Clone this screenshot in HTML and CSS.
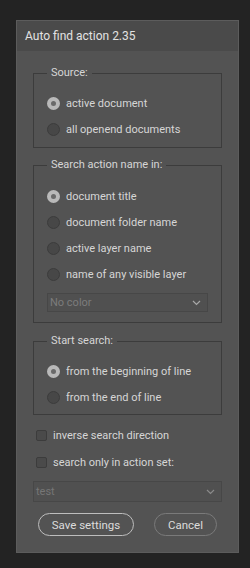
FILE: index.html
```html
<!DOCTYPE html>
<html>
<head>
<meta charset="utf-8">
<link rel="stylesheet" href="styles.css">
</head>
<body>
<div class="dialog">
  <div class="titlebar">Auto find action 2.35</div>
  <div class="content">
    <div class="group g-source">
      <div class="legend">Source:</div>
      <label class="row first"><span class="radio on"></span>active document</label>
      <label class="row"><span class="radio"></span>all openend documents</label>
    </div>
    <div class="group g-search">
      <div class="legend">Search action name in:</div>
      <label class="row first"><span class="radio on"></span>document title</label>
      <label class="row"><span class="radio"></span>document folder name</label>
      <label class="row"><span class="radio"></span>active layer name</label>
      <label class="row"><span class="radio"></span>name of any visible layer</label>
      <div class="select sel-color"><span>No color</span><svg class="chev" width="9" height="6" viewBox="0 0 9 6"><path d="M1 1l3.5 3.5L8 1" fill="none" stroke="#a8a8a8" stroke-width="1.2"/></svg></div>
    </div>
    <div class="group g-start">
      <div class="legend">Start search:</div>
      <label class="row first"><span class="radio on"></span>from the beginning of line</label>
      <label class="row"><span class="radio"></span>from the end of line</label>
    </div>
    <div class="checks">
      <label class="crow"><span class="check"></span>inverse search direction</label>
      <label class="crow"><span class="check"></span>search only in action set:</label>
    </div>
    <div class="select sel-set"><span>test</span><svg class="chev" width="9" height="6" viewBox="0 0 9 6"><path d="M1 1l3.5 3.5L8 1" fill="none" stroke="#8a8a8a" stroke-width="1.2"/></svg></div>
    <div class="buttons">
      <button class="btn primary">Save settings</button>
      <button class="btn">Cancel</button>
    </div>
  </div>
</div>
</body>
</html>
```

FILE: styles.css
```css
html, body {
  margin: 0;
  padding: 0;
  background: #232323;
}
body {
  font-family: Roboto, "Noto Sans", sans-serif;
  font-size: 11px;
  color: #d6d6d6;
}
.dialog {
  margin: 20px 0 0 16px;
  width: 223px;
  height: 533px;
  box-sizing: border-box;
  border: 1px solid #5c5c5c;
  background: #535353;
  display: flex;
  flex-direction: column;
}
.titlebar {
  height: 30px;
  background: #4a4a4a;
  display: flex;
  align-items: center;
  padding-left: 8px;
  font-size: 12px;
  color: #e2e2e2;
}
.content {
  padding: 22px 16px 0 16px;
  display: flex;
  flex-direction: column;
}
.group {
  border: 1px solid #3c3c3c;
  padding: 0 0 0 13px;
  display: flex;
  flex-direction: column;
}
.legend {
  align-self: flex-start;
  margin: -9px 0 0 0;
  padding: 0 4px;
  height: 16px;
  line-height: 16px;
  background: #535353;
}
.row {
  height: 26px;
  display: flex;
  align-items: center;
  gap: 6px;
}
.g-source { padding-bottom: 5px; }
.g-source .first { margin-top: 9px; }
.g-search { margin-top: 17px; padding-bottom: 10px; }
.g-search .first { margin-top: 10px; }
.g-start { margin-top: 18px; padding-bottom: 4px; }
.g-start .first { margin-top: 9px; }
.radio {
  width: 13px;
  height: 13px;
  box-sizing: border-box;
  border-radius: 50%;
  border: 1px solid #3c3c3c;
  background: #474747;
  flex: none;
}
.radio.on {
  border: 4px solid #b9b9b9;
  background: #6a6a6a;
}
.select {
  height: 19px;
  box-sizing: border-box;
  border: 1px solid #474747;
  background: #505050;
  display: flex;
  align-items: center;
  justify-content: space-between;
  padding: 0 6px 0 2px;
  color: #7c7c7c;
}
.sel-color {
  margin: 6px 13px 0 0;
}
.checks {
  margin-top: 7px;
  display: flex;
  flex-direction: column;
}
.crow {
  height: 27px;
  display: flex;
  align-items: center;
  gap: 6px;
  padding-left: 3px;
}
.check {
  width: 11px;
  height: 11px;
  box-sizing: border-box;
  border: 1px solid #3c3c3c;
  background: #4a4a4a;
  border-radius: 2px;
  flex: none;
}
.sel-set {
  margin-top: 5px;
  height: 21px;
  color: #767676;
}
.buttons {
  margin-top: 11px;
  display: flex;
  padding-left: 5px;
  gap: 20px;
}
.btn {
  height: 23px;
  border-radius: 12px;
  background: transparent;
  border: 1px solid #bdbdbd;
  color: #dcdcdc;
  font-family: inherit;
  font-size: 11.5px;
  padding: 0;
  width: 96px;
}
.btn:not(.primary) {
  width: 63px;
  border-color: #7a7a7a;
}
```
